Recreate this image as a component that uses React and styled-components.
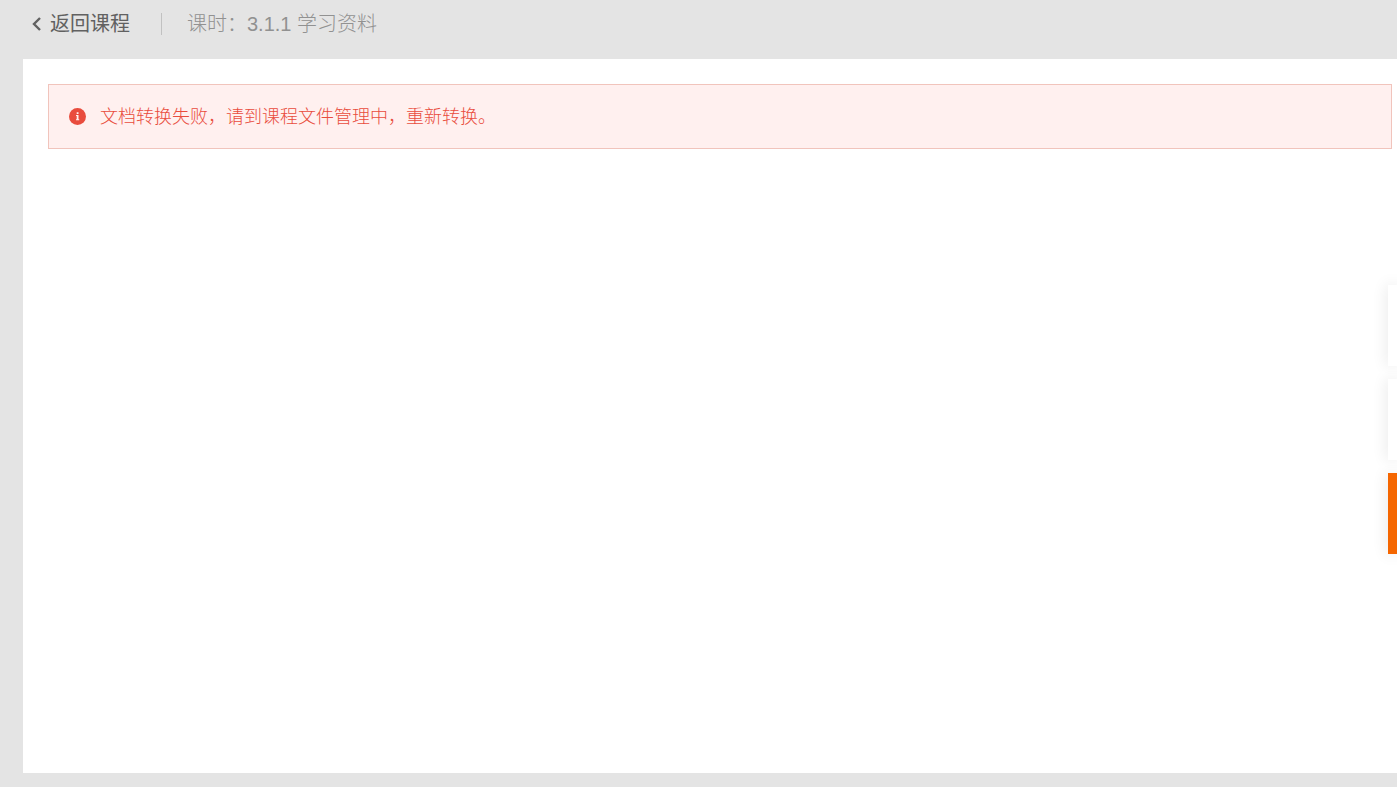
import styled, { createGlobalStyle } from "styled-components";

const GlobalStyle = createGlobalStyle`
  * {
    box-sizing: border-box;
  }
  body {
    margin: 0;
    background-color: #e4e4e4;
    font-family: "Liberation Sans", "Noto Sans CJK SC", sans-serif;
  }
`;

const Page = styled.div`
  display: flex;
  flex-direction: column;
  min-height: 100vh;
  padding: 0 0 14px 23px;
`;

const Header = styled.header`
  display: flex;
  align-items: center;
  height: 59px;
  padding: 0 8px 12px;
  font-size: 20px;
  line-height: 24px;
`;

const BackLink = styled.a`
  display: flex;
  align-items: center;
  gap: 9px;
  padding-right: 31px;
  color: #616161;
  text-decoration: none;
  &:hover {
    opacity: 0.8;
  }
`;

const Lesson = styled.h1`
  margin: 0;
  font-size: 20px;
  font-weight: 300;
  line-height: 24px;
  color: #919191;
`;

const Divider = styled.span`
  width: 1px;
  height: 22px;
  margin-right: 25px;
  background-color: #c1c1c1;
`;

const Panel = styled.main`
  flex: 1;
  padding: 25px 5px 25px 25px;
  background-color: white;
`;

const Alert = styled.div`
  display: flex;
  align-items: center;
  gap: 14px;
  min-height: 65px;
  padding: 12px 20px;
  border: 1px solid #f1c4bc;
  background-color: #fff0ef;
  color: #e94c3d;
  font-size: 18px;
  font-weight: 300;
  line-height: 24px;
  p {
    margin: 0;
  }
`;

const SideBar = styled.aside`
  position: fixed;
  right: 0;
  bottom: 233px;
  display: flex;
  flex-direction: column;
  gap: 13px;
`;

const SideButton = styled.button`
  width: 9px;
  height: 81px;
  padding: 0;
  border: none;
  background-color: ${(props) => (props.$primary ? "#f56600" : "white")};
  box-shadow: 0 0 16px rgba(0, 0, 0, 0.12);
  cursor: pointer;
`;

const BackIcon = () => (
  <svg width="10" height="16" viewBox="0 0 10 16" aria-hidden="true">
    <path d="M9 2 L3 8 L9 14" fill="none" stroke="#616161" strokeWidth="2.4" />
  </svg>
);

const InfoIcon = () => (
  <svg width="17" height="17" viewBox="0 0 17 17" aria-hidden="true">
    <circle cx="8.5" cy="8.5" r="8.5" fill="#e94c3d" />
    <path
      d="M7.7 4.2h1.8v1.7H7.7zM7 7h2.5v4.3h.7v1H7v-1h.7V8H7z"
      fill="#fff0ef"
    />
  </svg>
);

const sideItems = [
  { label: "笔记" },
  { label: "问答" },
  { label: "目录", primary: true },
];

export default function App() {
  return (
    <>
      <GlobalStyle />
      <Page>
        <Header>
          <BackLink href="#">
            <BackIcon />
            返回课程
          </BackLink>
          <Divider />
          <Lesson>课时：3.1.1 学习资料</Lesson>
        </Header>
        <Panel>
          <Alert role="alert">
            <InfoIcon />
            <p>文档转换失败，请到课程文件管理中，重新转换。</p>
          </Alert>
        </Panel>
      </Page>
      <SideBar>
        {sideItems.map((e) => (
          <SideButton key={e.label} $primary={e.primary} aria-label={e.label} />
        ))}
      </SideBar>
    </>
  );
}
